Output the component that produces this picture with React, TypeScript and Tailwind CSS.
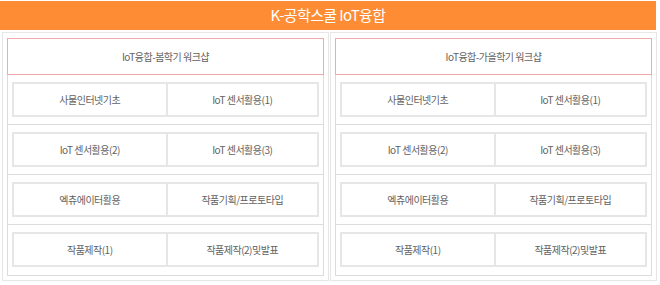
import React from 'react';

type Course = [string, string];

interface TermBoardProps {
  title: string;
  rows: Course[];
}

const courses: Course[] = [
  ['사물인터넷기초', 'IoT 센서활용(1)'],
  ['IoT 센서활용(2)', 'IoT 센서활용(3)'],
  ['엑츄에이터활용', '작품기획/프로토타입'],
  ['작품제작(1)', '작품제작(2)및발표'],
];

const TermBoard: React.FC<TermBoardProps> = ({ title, rows }) => {
  return (
    <div className="w-[327px] border border-[#e6e6e6] px-[4px] pt-[5px] pb-[4px]">
      <div className="flex flex-col border border-[#dcdcdc]">
        <div className="-mx-px -mt-px h-[37px] border border-[#f2a9a9] flex items-center justify-center text-[10px] tracking-[-0.5px] text-[#626262]">
          {title}
        </div>
        {rows.map((row, i) => (
          <div
            key={i}
            className={
              i === rows.length - 1
                ? 'px-[4px] pt-[7px] pb-[8px]'
                : 'px-[4px] pt-[7px] pb-[7px] border-b border-[#dcdcdc]'
            }
          >
            <div className="h-[35px] grid grid-cols-2 border-2 border-[#e6e6e6] text-[10px] tracking-[-0.5px] text-[#626262]">
              <div className="flex items-center justify-center">{row[0]}</div>
              <div className="flex items-center justify-center border-l-2 border-[#e6e6e6]">{row[1]}</div>
            </div>
          </div>
        ))}
      </div>
    </div>
  );
};

export default function App() {
  return (
    <div
      className="w-[660px] h-[285px] bg-white overflow-hidden"
      style={{ fontFamily: '"Noto Sans CJK KR", "Noto Sans", sans-serif' }}
    >
      <div className="mt-px w-[656px] h-[29px] bg-[#fd8c35] flex items-center justify-center text-white text-[15px] tracking-[-0.6px]">
        K-공학스쿨 IoT융합
      </div>
      <div className="ml-[2px] mt-[2px] flex gap-[1px]">
        <TermBoard title="IoT융합-봄학기 워크샵" rows={courses} />
        <TermBoard title="IoT융합-가을학기 워크샵" rows={courses} />
      </div>
    </div>
  );
}
